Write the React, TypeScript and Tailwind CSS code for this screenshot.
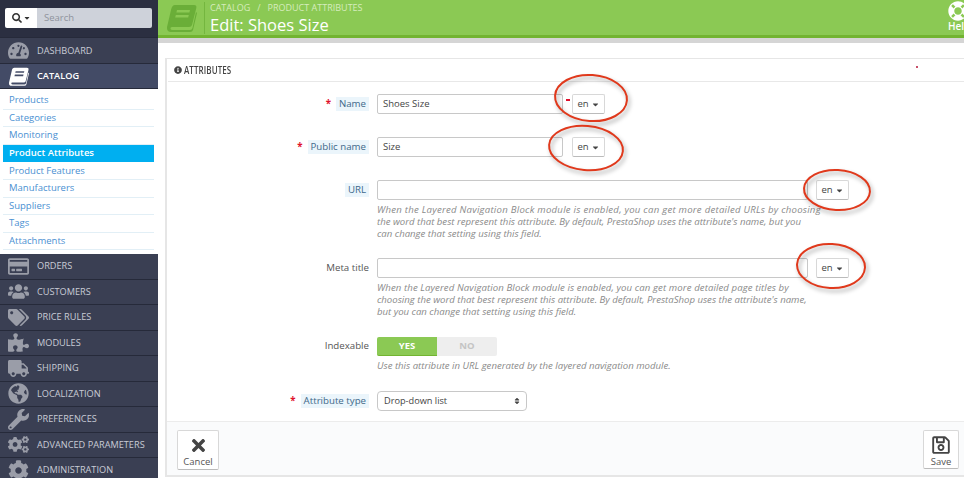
import React from "react";
import {
  FaCaretDown, FaCog, FaCogs, FaGlobeAmericas, FaInfoCircle, FaLifeRing, FaPuzzlePiece,
  FaRegCreditCard, FaRegSave, FaSearch, FaSort, FaTachometerAlt, FaTags, FaTimes, FaTruck, FaUsers, FaWrench,
} from "react-icons/fa";

const font = { fontFamily: '"Open Sans", "Liberation Sans", sans-serif' };

function BookIcon({ className }: { className?: string }) {
  return (
    <svg viewBox="0 0 30 28" className={className} fill="currentColor" fillRule="evenodd">
      <path d="M8 1h19q3 0 2.3 3L25 21q-.6 2-3 2H5q-2 0-1.5 2 .3 1 2 1H23q2 0 2.5-2L29 8l1 1-4 17q-.5 2-3 2H4q-4 0-4-4 0-1.500.5-3L4 6q1-5 4-5zM10 6l-.6 2.500h13L23 6zM8.800 11l-.6 2.500h13l.6-2.500z" />
    </svg>
  );
}

function NavItem({ icon, label, active, h = "h-[25.5px]" }: { icon: React.ReactNode; label: string; active?: boolean; h?: string }) {
  return (
    <div className={`${h} flex items-center border-b border-[#262a3a] ${active ? "bg-[#434b66] text-white font-semibold" : "bg-[#3a3f53] text-[#c9ccd6]"}`}>
      <span className={`w-[37px] flex justify-center shrink-0 text-[21px] ${active ? "text-white" : "text-[#9a9da8]"}`}>{icon}</span>
      <span className="text-[9.2px] whitespace-nowrap">{label}</span>
    </div>
  );
}

function SubItem({ label, active }: { label: string; active?: boolean }) {
  return (
    <div className={`h-[17.6px] flex items-center pl-[6px] text-[9.5px] ${active ? "bg-[#00aff0] text-white font-semibold" : "text-[#4a90d2] border-b border-[#e2eff6]"}`}>
      {label}
    </div>
  );
}

function Label({ text, req, tip }: { text: string; req?: boolean; tip?: boolean }) {
  return (
    <div className="w-[210px] pr-[8px] shrink-0 flex justify-end items-center gap-[5px] text-[9.7px]">
      {req && <span className="text-[#e0102c] font-bold">*</span>}
      <span className={tip ? "bg-[#ebf5fb] text-[#40688a] px-[3px]" : "text-[#555]"}>{text}</span>
    </div>
  );
}

function Input({ value, w }: { value?: string; w: string }) {
  return (
    <div className={`${w} h-[20px] border border-[#c8c8c8] rounded-[2px] bg-white flex items-center pl-[5px] text-[9.5px] text-[#444]`}>
      {value}
    </div>
  );
}

function Lang() {
  return (
    <div className="w-[33px] h-[20px] border border-[#d8d8d8] border-b-[#bbb] rounded-[2px] bg-white flex items-center justify-center gap-[2px] text-[9.5px] text-[#444]">
      en <FaCaretDown className="text-[9px]" />
    </div>
  );
}

function Help({ cls, children }: { cls: string; children: React.ReactNode }) {
  return <div className={`ml-[210px] ${cls} text-[9.6px] leading-[12px] italic text-[#8a8a8a] whitespace-nowrap`}>{children}</div>;
}

export default function App() {
  return (
    <div style={font} className="relative w-[964px] h-[478px] overflow-hidden flex bg-white">
      <aside className="w-[158px] shrink-0 h-full overflow-hidden bg-white">
        <div className="h-[38px] bg-[#2b2f41] border-b border-[#262a3a] flex items-start pt-[8px] pl-[5px]">
          <div className="w-[32px] h-[20px] bg-white flex items-center justify-center gap-[1px] text-[#333] rounded-l-[2px]">
            <FaSearch className="text-[10px]" />
            <FaCaretDown className="text-[8px]" />
          </div>
          <div className="w-[115px] h-[20px] bg-[#ced2da] rounded-r-[2px] flex items-center pl-[7px] text-[9.5px] text-[#8f939c]">Search</div>
        </div>
        <NavItem icon={<FaTachometerAlt />} label="DASHBOARD" h="h-[26px]" />
        <NavItem icon={<BookIcon className="w-[20px] h-[19px]" />} label="CATALOG" active h="h-[25px]" />
        <div className="h-[165px] pt-[3px] pl-[3px] pr-[4px] bg-white">
          <SubItem label="Products" />
          <SubItem label="Categories" />
          <SubItem label="Monitoring" />
          <SubItem label="Product Attributes" active />
          <SubItem label="Product Features" />
          <SubItem label="Manufacturers" />
          <SubItem label="Suppliers" />
          <SubItem label="Tags" />
          <SubItem label="Attachments" />
        </div>
        <NavItem icon={<FaRegCreditCard />} label="ORDERS" />
        <NavItem icon={<FaUsers />} label="CUSTOMERS" />
        <NavItem icon={<FaTags />} label="PRICE RULES" />
        <NavItem icon={<FaPuzzlePiece />} label="MODULES" />
        <NavItem icon={<FaTruck />} label="SHIPPING" />
        <NavItem icon={<FaGlobeAmericas />} label="LOCALIZATION" />
        <NavItem icon={<FaWrench />} label="PREFERENCES" />
        <NavItem icon={<FaCogs />} label="ADVANCED PARAMETERS" />
        <NavItem icon={<FaCog />} label="ADMINISTRATION" />
      </aside>

      <main className="flex-1 min-w-0 h-full overflow-hidden flex flex-col">
        <header className="h-[43px] shrink-0 bg-[#8bc954] border-b-[5px] border-[#d5d5d5]">
          <div className="h-[38px] border-b-[3px] border-[#72b431] flex overflow-hidden">
            <div className="w-[46px] shrink-0 flex justify-center pt-[4px] pl-[2px] text-[#6aae38]">
              <BookIcon className="w-[30px] h-[28px]" />
            </div>
            <div className="w-px h-[32px] mt-[2px] bg-[#74b63f]" />
            <div className="pl-[5px] flex-1">
              <div className="h-[15px] flex items-center gap-[7px] text-[9px] text-[#d6ecbd] whitespace-nowrap">
                <span>CATALOG</span><span>/</span><span>PRODUCT ATTRIBUTES</span>
              </div>
              <div className="text-[16.5px] leading-[20px] text-white whitespace-nowrap">Edit: Shoes Size</div>
            </div>
            <div className="w-[16px] shrink-0 overflow-hidden text-white">
              <FaLifeRing className="text-[20px] mt-[1px] shrink-0" />
              <div className="text-[10px] leading-[11px] font-semibold whitespace-nowrap">Help</div>
            </div>
          </div>
        </header>

        <div className="pt-[15px] pl-[7px] flex-1 min-h-0">
          <section className="w-[820px] h-[419px] border-l-2 border-t border-b-2 border-[#e6e6e6] flex flex-col">
            <div className="h-[23px] ml-[1px] border-b border-[#e8e8e8] flex items-center gap-[2px] pl-[6px] text-[#444] shrink-0">
              <FaInfoCircle className="text-[8px]" />
              <span className="text-[10px] font-semibold origin-left scale-x-[0.8] tracking-[0.1px]">ATTRIBUTES</span>
            </div>

            <div className="flex-1 pt-[12px]">
              <div className="flex items-center mb-[23px]">
                <Label text="Name" req tip />
                <Input value="Shoes Size" w="w-[186px]" />
                <div className="ml-[9px]"><Lang /></div>
              </div>
              <div className="flex items-center mb-[23px]">
                <Label text="Public name" req tip />
                <Input value="Size" w="w-[186px]" />
                <div className="ml-[9px]"><Lang /></div>
              </div>
              <div className="flex items-center">
                <Label text="URL" tip />
                <Input w="w-[431px]" />
                <div className="ml-[8px]"><Lang /></div>
              </div>
              <Help cls="mt-[4px] mb-[18px]">
                <div className="tracking-[0.25px]">When the Layered Navigation Block module is enabled, you can get more detailed URLs by choosing</div>
                <div>the word that best represent this attribute. By default, PrestaShop uses the attribute's name, but you</div>
                <div>can change that setting using this field.</div>
              </Help>
              <div className="flex items-center">
                <Label text="Meta title" />
                <Input w="w-[431px]" />
                <div className="ml-[8px]"><Lang /></div>
              </div>
              <Help cls="mt-[4px] mb-[19px]">
                <div className="tracking-[0.1px]">When the Layered Navigation Block module is enabled, you can get more detailed page titles by</div>
                <div>choosing the word that best represent this attribute. By default, PrestaShop uses the attribute's name,</div>
                <div>but you can change that setting using this field.</div>
              </Help>
              <div className="flex items-center">
                <Label text="Indexable" />
                <div className="w-[120px] h-[19px] flex text-[9.5px] font-bold">
                  <div className="w-[60px] bg-[#8bc954] text-white flex items-center justify-center rounded-l-[2px] border-b border-[#72b431]">YES</div>
                  <div className="w-[60px] bg-[#eeeeee] text-[#c4c4c4] flex items-center justify-center rounded-r-[2px]">NO</div>
                </div>
              </div>
              <Help cls="mt-[4px] mb-[19px]">
                <div>Use this attribute in URL generated by the layered navigation module.</div>
              </Help>
              <div className="flex items-center">
                <Label text="Attribute type" req tip />
                <div className="w-[150px] h-[20px] border border-[#c8c8c8] rounded-[4px] bg-white flex items-center justify-between pl-[6px] pr-[5px] text-[9.2px] text-[#444]">
                  Drop-down list
                  <FaSort className="text-[8px]" />
                </div>
              </div>
            </div>

            <footer className="h-[54px] shrink-0 border-t border-[#ececec] bg-[#fafbfc] flex justify-between pt-[8px] pl-[10px] pr-[26px]">
              <div className="w-[42px] h-[40px] bg-white border border-[#d8d8d8] border-b-[#bbb] rounded-[2px] flex flex-col items-center pt-[5px] text-[9.5px] text-[#555]">
                <FaTimes className="text-[19px] text-[#444] shrink-0" />
                <span className="leading-[12px] mt-[1px]">Cancel</span>
              </div>
              <div className="w-[36px] h-[39px] bg-white border border-[#d8d8d8] border-b-[#bbb] rounded-[2px] flex flex-col items-center pt-[4px] text-[9.5px] text-[#555]">
                <FaRegSave className="text-[20px] text-[#444] shrink-0" />
                <span className="leading-[12px] mt-[1px]">Save</span>
              </div>
            </footer>
          </section>
        </div>
      </main>

      <div className="absolute left-[566px] top-[99px] w-[4px] h-[2px] bg-[#e0102c]" />
      <div className="absolute left-[916px] top-[66px] w-[2px] h-[2px] bg-[#c8506a]" />

      <svg className="absolute inset-0 pointer-events-none drop-shadow-[2px_3px_2px_rgba(0,0,0,0.35)]" width="964" height="478" fill="none" stroke="#e0391c" strokeWidth="2">
        <ellipse cx="591" cy="98" rx="36" ry="23" transform="rotate(4 591 98)" />
        <ellipse cx="586" cy="148" rx="37" ry="22" transform="rotate(5 586 148)" />
        <ellipse cx="837" cy="190" rx="33" ry="20" transform="rotate(3 837 190)" />
        <ellipse cx="831" cy="266" rx="34" ry="22" transform="rotate(3 831 266)" />
      </svg>
    </div>
  );
}
